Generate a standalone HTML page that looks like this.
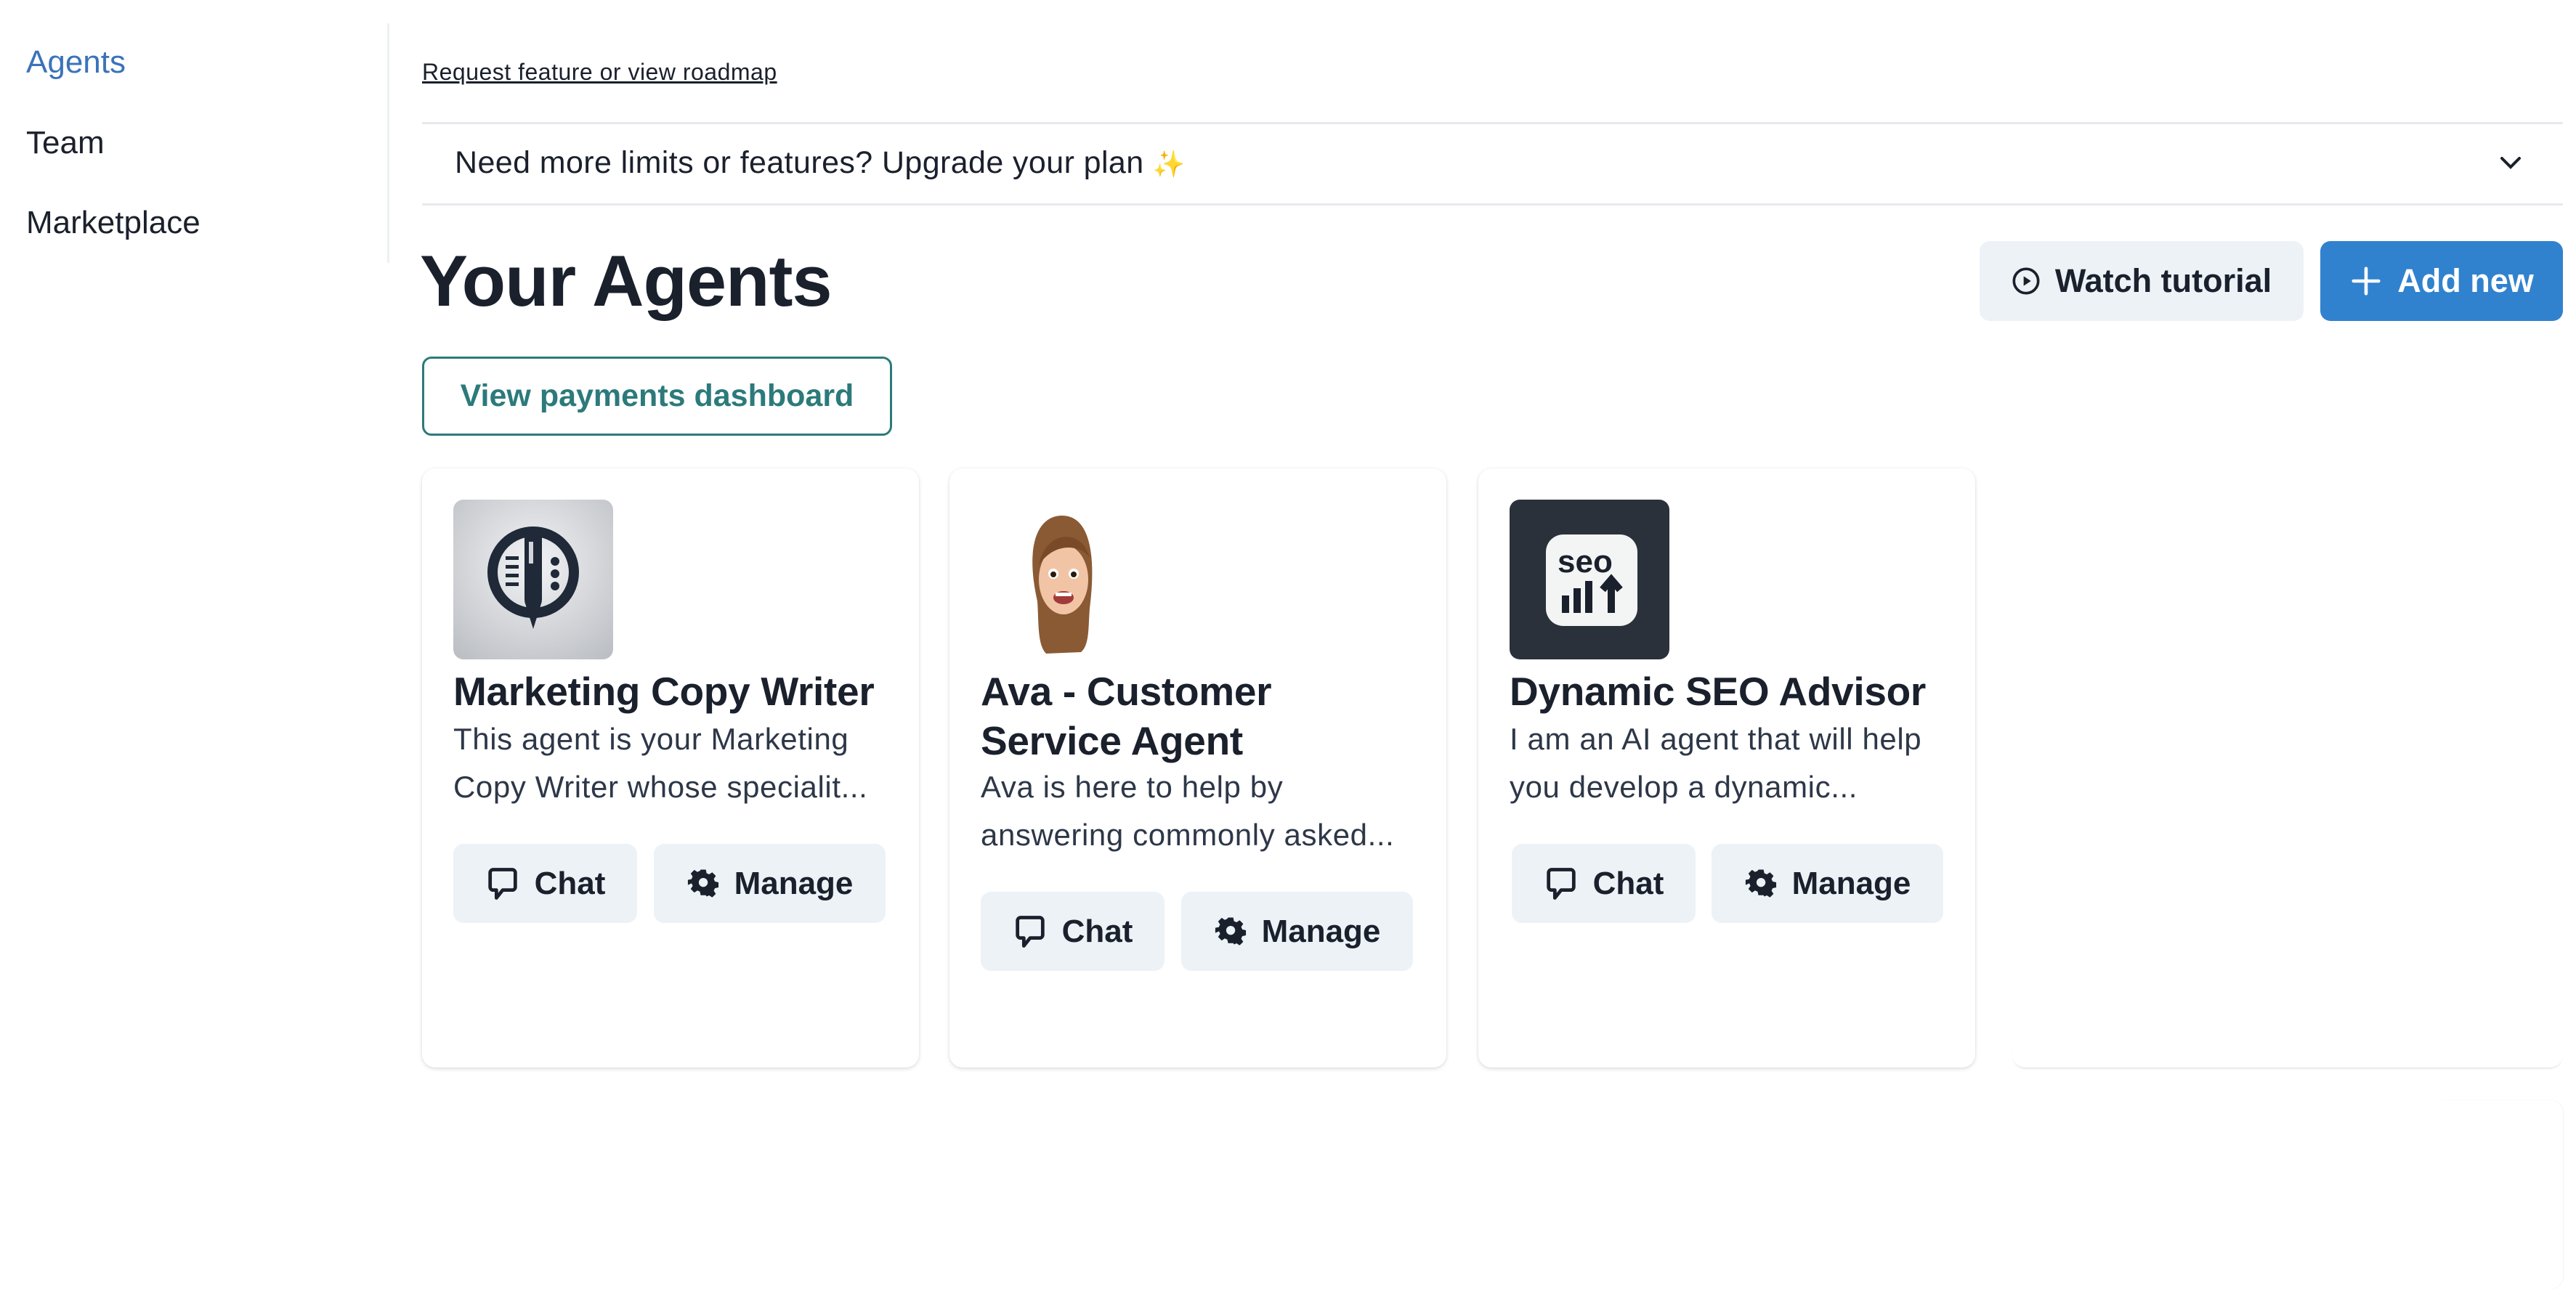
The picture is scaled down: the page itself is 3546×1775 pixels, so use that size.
<!DOCTYPE html>
<html><head><meta charset="utf-8"><style>
*{margin:0;padding:0;box-sizing:border-box}
body{width:3546px;height:1725px;background:#fff;font-family:"Liberation Sans",Arial,sans-serif;color:#1a202c;position:relative;overflow:hidden}
.a{position:absolute}
.nav{left:36px;font-size:44px;color:#1a202c;line-height:50px}
.card{position:absolute;top:645px;width:684px;height:825px;background:#fff;border-radius:18px;box-shadow:0 2px 6px rgba(0,0,0,.13),0 0 2px rgba(0,0,0,.06)}
.img{position:absolute;left:43px;top:43px;width:220px;height:220px;border-radius:14px;overflow:hidden}
.t{position:absolute;left:43px;font-size:55px;font-weight:bold;line-height:68px;color:#1a202c;white-space:nowrap;letter-spacing:-0.3px}
.d{position:absolute;left:43px;font-size:42px;line-height:66px;color:#2d3748;white-space:nowrap;letter-spacing:0.6px}
.btn{position:absolute;height:109px;background:#edf2f7;border-radius:14px;font-size:44px;font-weight:bold;color:#1a202c;display:flex;align-items:center;justify-content:center;gap:20px}
</style></head><body>
<div class="a nav" style="top:61px;color:#3b73b9">Agents</div>
<div class="a nav" style="top:172px">Team</div>
<div class="a nav" style="top:282px">Marketplace</div>
<div class="a" style="left:533px;top:32px;width:3px;height:330px;background:#edf0f3"></div>

<div class="a" style="left:581px;top:81px;font-size:32px;letter-spacing:0.5px;text-decoration:underline;color:#1a202c">Request feature or view roadmap</div>
<div class="a" style="left:581px;top:168px;width:2947px;height:3px;background:#e6e9ee"></div>
<div class="a" style="left:626px;top:200px;font-size:43px;letter-spacing:0.4px;color:#1a202c">Need more limits or features? Upgrade your plan <span style="color:#f5d36a;font-size:36px">✨</span></div>
<svg class="a" style="left:3440px;top:213px" width="32" height="22" viewBox="0 0 32 22"><path d="M4 5 L16 17 L28 5" fill="none" stroke="#1a202c" stroke-width="4" stroke-linecap="round"/></svg>
<div class="a" style="left:581px;top:280px;width:2947px;height:3px;background:#e6e9ee"></div>

<div class="a" style="left:578px;top:330px;font-size:99px;font-weight:bold;color:#1a202c;letter-spacing:-1px">Your Agents</div>

<div class="a btn" style="left:2725px;top:332px;width:446px;height:110px;font-weight:bold;font-size:45px">
<svg width="40" height="40" viewBox="0 0 24 24"><circle cx="12" cy="12" r="10" fill="none" stroke="#1a202c" stroke-width="2.2"/><path d="M10 8 L16 12 L10 16Z" fill="#1a202c"/></svg>Watch tutorial</div>
<div class="a btn" style="left:3194px;top:332px;width:334px;height:110px;background:#3182ce;color:#fff;font-size:45px">
<svg width="46" height="46" viewBox="0 0 24 24"><path d="M12 3V21M3 12H21" stroke="#fff" stroke-width="2.4" stroke-linecap="round"/></svg>Add new</div>

<div class="a" style="left:581px;top:491px;width:647px;height:109px;border:3px solid #2c7a7b;border-radius:13px;display:flex;align-items:center;justify-content:center;font-size:43px;font-weight:bold;color:#2c7a7b">View payments dashboard</div>

<!-- card 1 -->
<div class="card" style="left:581px">
 <div class="img" style="background:radial-gradient(circle at 50% 40%,#f2f3f5,#b9bcc1)">
  <svg width="220" height="220" viewBox="0 0 220 220"><circle cx="110" cy="100" r="56" fill="none" stroke="#1f2937" stroke-width="14"/><rect x="98" y="42" width="24" height="100" rx="4" fill="#1f2937"/><path d="M98 140 L110 178 L122 140Z" fill="#1f2937"/><rect x="104" y="58" width="6" height="30" fill="#d1d5db"/><rect x="72" y="78" width="18" height="5" fill="#1f2937"/><rect x="72" y="90" width="18" height="5" fill="#1f2937"/><rect x="72" y="102" width="18" height="5" fill="#1f2937"/><rect x="72" y="114" width="18" height="5" fill="#1f2937"/><circle cx="140" cy="85" r="6" fill="#1f2937"/><circle cx="140" cy="102" r="6" fill="#1f2937"/><circle cx="140" cy="119" r="6" fill="#1f2937"/></svg>
 </div>
 <div class="t" style="top:273px">Marketing Copy Writer</div>
 <div class="d" style="top:340px">This agent is your Marketing</div>
 <div class="d" style="top:406px">Copy Writer whose specialit...</div>
 <div class="btn" style="left:43px;top:517px;width:253px">
  <svg width="48" height="52" viewBox="0 0 22 24"><path d="M5 3H17A2 2 0 0 1 19 5V14A2 2 0 0 1 17 16H11L7 21V16H5A2 2 0 0 1 3 14V5A2 2 0 0 1 5 3Z" fill="none" stroke="#1a202c" stroke-width="2.2" stroke-linejoin="round"/></svg>Chat</div>
 <div class="btn" style="left:319px;top:517px;width:319px">
  <svg width="46" height="46" viewBox="0 0 24 24"><path fill="#1a202c" fill-rule="evenodd" d="M10 2h4l.6 2.8 2 .9 2.4-1.6 2.8 2.8-1.6 2.4.9 2 2.8.6v4l-2.8.6-.9 2 1.6 2.4-2.8 2.8-2.4-1.6-2 .9L14 22h-4l-.6-2.8-2-.9-2.4 1.6-2.8-2.8 1.6-2.4-.9-2L0 14v-4l2.8-.6.9-2L2.2 5 5 2.2l2.4 1.6 2-.9ZM12 8.5a3.5 3.5 0 1 0 0 7 3.5 3.5 0 1 0 0-7Z" transform="translate(1 0) scale(.92)"/></svg>Manage</div>
</div>

<!-- card 2 -->
<div class="card" style="left:1307px">
 <div class="img">
  <svg width="220" height="220" viewBox="0 0 220 220"><path d="M78 140 C60 60 80 22 112 22 C148 22 160 70 150 150 C148 175 150 200 138 210 L90 212 C78 200 80 170 78 140Z" fill="#8a5a34"/><ellipse cx="114" cy="110" rx="34" ry="48" fill="#f2c4a6"/><path d="M80 90 C90 40 140 40 150 80 C135 60 100 60 80 90Z" fill="#7a4a28"/><circle cx="100" cy="102" r="7" fill="#fff"/><circle cx="128" cy="102" r="7" fill="#fff"/><circle cx="100" cy="103" r="4" fill="#2a1a10"/><circle cx="128" cy="103" r="4" fill="#2a1a10"/><ellipse cx="114" cy="135" rx="14" ry="9" fill="#a33a3a"/><rect x="103" y="128" width="22" height="5" fill="#fff"/></svg>
 </div>
 <div class="t" style="top:273px">Ava - Customer</div>
 <div class="t" style="top:341px">Service Agent</div>
 <div class="d" style="top:406px">Ava is here to help by</div>
 <div class="d" style="top:472px">answering commonly asked...</div>
 <div class="btn" style="left:43px;top:583px;width:253px">
  <svg width="48" height="52" viewBox="0 0 22 24"><path d="M5 3H17A2 2 0 0 1 19 5V14A2 2 0 0 1 17 16H11L7 21V16H5A2 2 0 0 1 3 14V5A2 2 0 0 1 5 3Z" fill="none" stroke="#1a202c" stroke-width="2.2" stroke-linejoin="round"/></svg>Chat</div>
 <div class="btn" style="left:319px;top:583px;width:319px">
  <svg width="46" height="46" viewBox="0 0 24 24"><path fill="#1a202c" fill-rule="evenodd" d="M10 2h4l.6 2.8 2 .9 2.4-1.6 2.8 2.8-1.6 2.4.9 2 2.8.6v4l-2.8.6-.9 2 1.6 2.4-2.8 2.8-2.4-1.6-2 .9L14 22h-4l-.6-2.8-2-.9-2.4 1.6-2.8-2.8 1.6-2.4-.9-2L0 14v-4l2.8-.6.9-2L2.2 5 5 2.2l2.4 1.6 2-.9ZM12 8.5a3.5 3.5 0 1 0 0 7 3.5 3.5 0 1 0 0-7Z" transform="translate(1 0) scale(.92)"/></svg>Manage</div>
</div>

<!-- card 3 -->
<div class="card" style="left:2035px">
 <div class="img" style="background:#2b313b">
  <svg width="220" height="220" viewBox="0 0 220 220"><rect x="50" y="48" width="126" height="126" rx="24" fill="#f3f4f4"/><text x="66" y="100" font-family="Liberation Sans,sans-serif" font-weight="bold" font-size="44" fill="#1a202c">seo</text><rect x="72" y="132" width="10" height="24" fill="#1a202c"/><rect x="88" y="122" width="10" height="34" fill="#1a202c"/><rect x="104" y="112" width="10" height="44" fill="#1a202c"/><path d="M140 156V112M128 124L140 110L152 124" fill="none" stroke="#1a202c" stroke-width="10"/></svg>
 </div>
 <div class="t" style="top:273px">Dynamic SEO Advisor</div>
 <div class="d" style="top:340px">I am an AI agent that will help</div>
 <div class="d" style="top:406px">you develop a dynamic...</div>
 <div class="btn" style="left:46px;top:517px;width:253px">
  <svg width="48" height="52" viewBox="0 0 22 24"><path d="M5 3H17A2 2 0 0 1 19 5V14A2 2 0 0 1 17 16H11L7 21V16H5A2 2 0 0 1 3 14V5A2 2 0 0 1 5 3Z" fill="none" stroke="#1a202c" stroke-width="2.2" stroke-linejoin="round"/></svg>Chat</div>
 <div class="btn" style="left:321px;top:517px;width:319px">
  <svg width="46" height="46" viewBox="0 0 24 24"><path fill="#1a202c" fill-rule="evenodd" d="M10 2h4l.6 2.8 2 .9 2.4-1.6 2.8 2.8-1.6 2.4.9 2 2.8.6v4l-2.8.6-.9 2 1.6 2.4-2.8 2.8-2.4-1.6-2 .9L14 22h-4l-.6-2.8-2-.9-2.4 1.6-2.8-2.8 1.6-2.4-.9-2L0 14v-4l2.8-.6.9-2L2.2 5 5 2.2l2.4 1.6 2-.9ZM12 8.5a3.5 3.5 0 1 0 0 7 3.5 3.5 0 1 0 0-7Z" transform="translate(1 0) scale(.92)"/></svg>Manage</div>
</div>

<!-- partial hidden cards -->
<div class="a" style="left:2770px;top:1440px;width:758px;height:30px;border-radius:0 0 18px 18px;box-shadow:0 3px 3px -2px rgba(0,0,0,.15);background:#fff"></div>
<div class="a" style="left:3350px;top:1515px;width:178px;height:260px;border-radius:18px;box-shadow:1px 0 2px rgba(0,0,0,.06);background:#fff"></div>
</body></html>
